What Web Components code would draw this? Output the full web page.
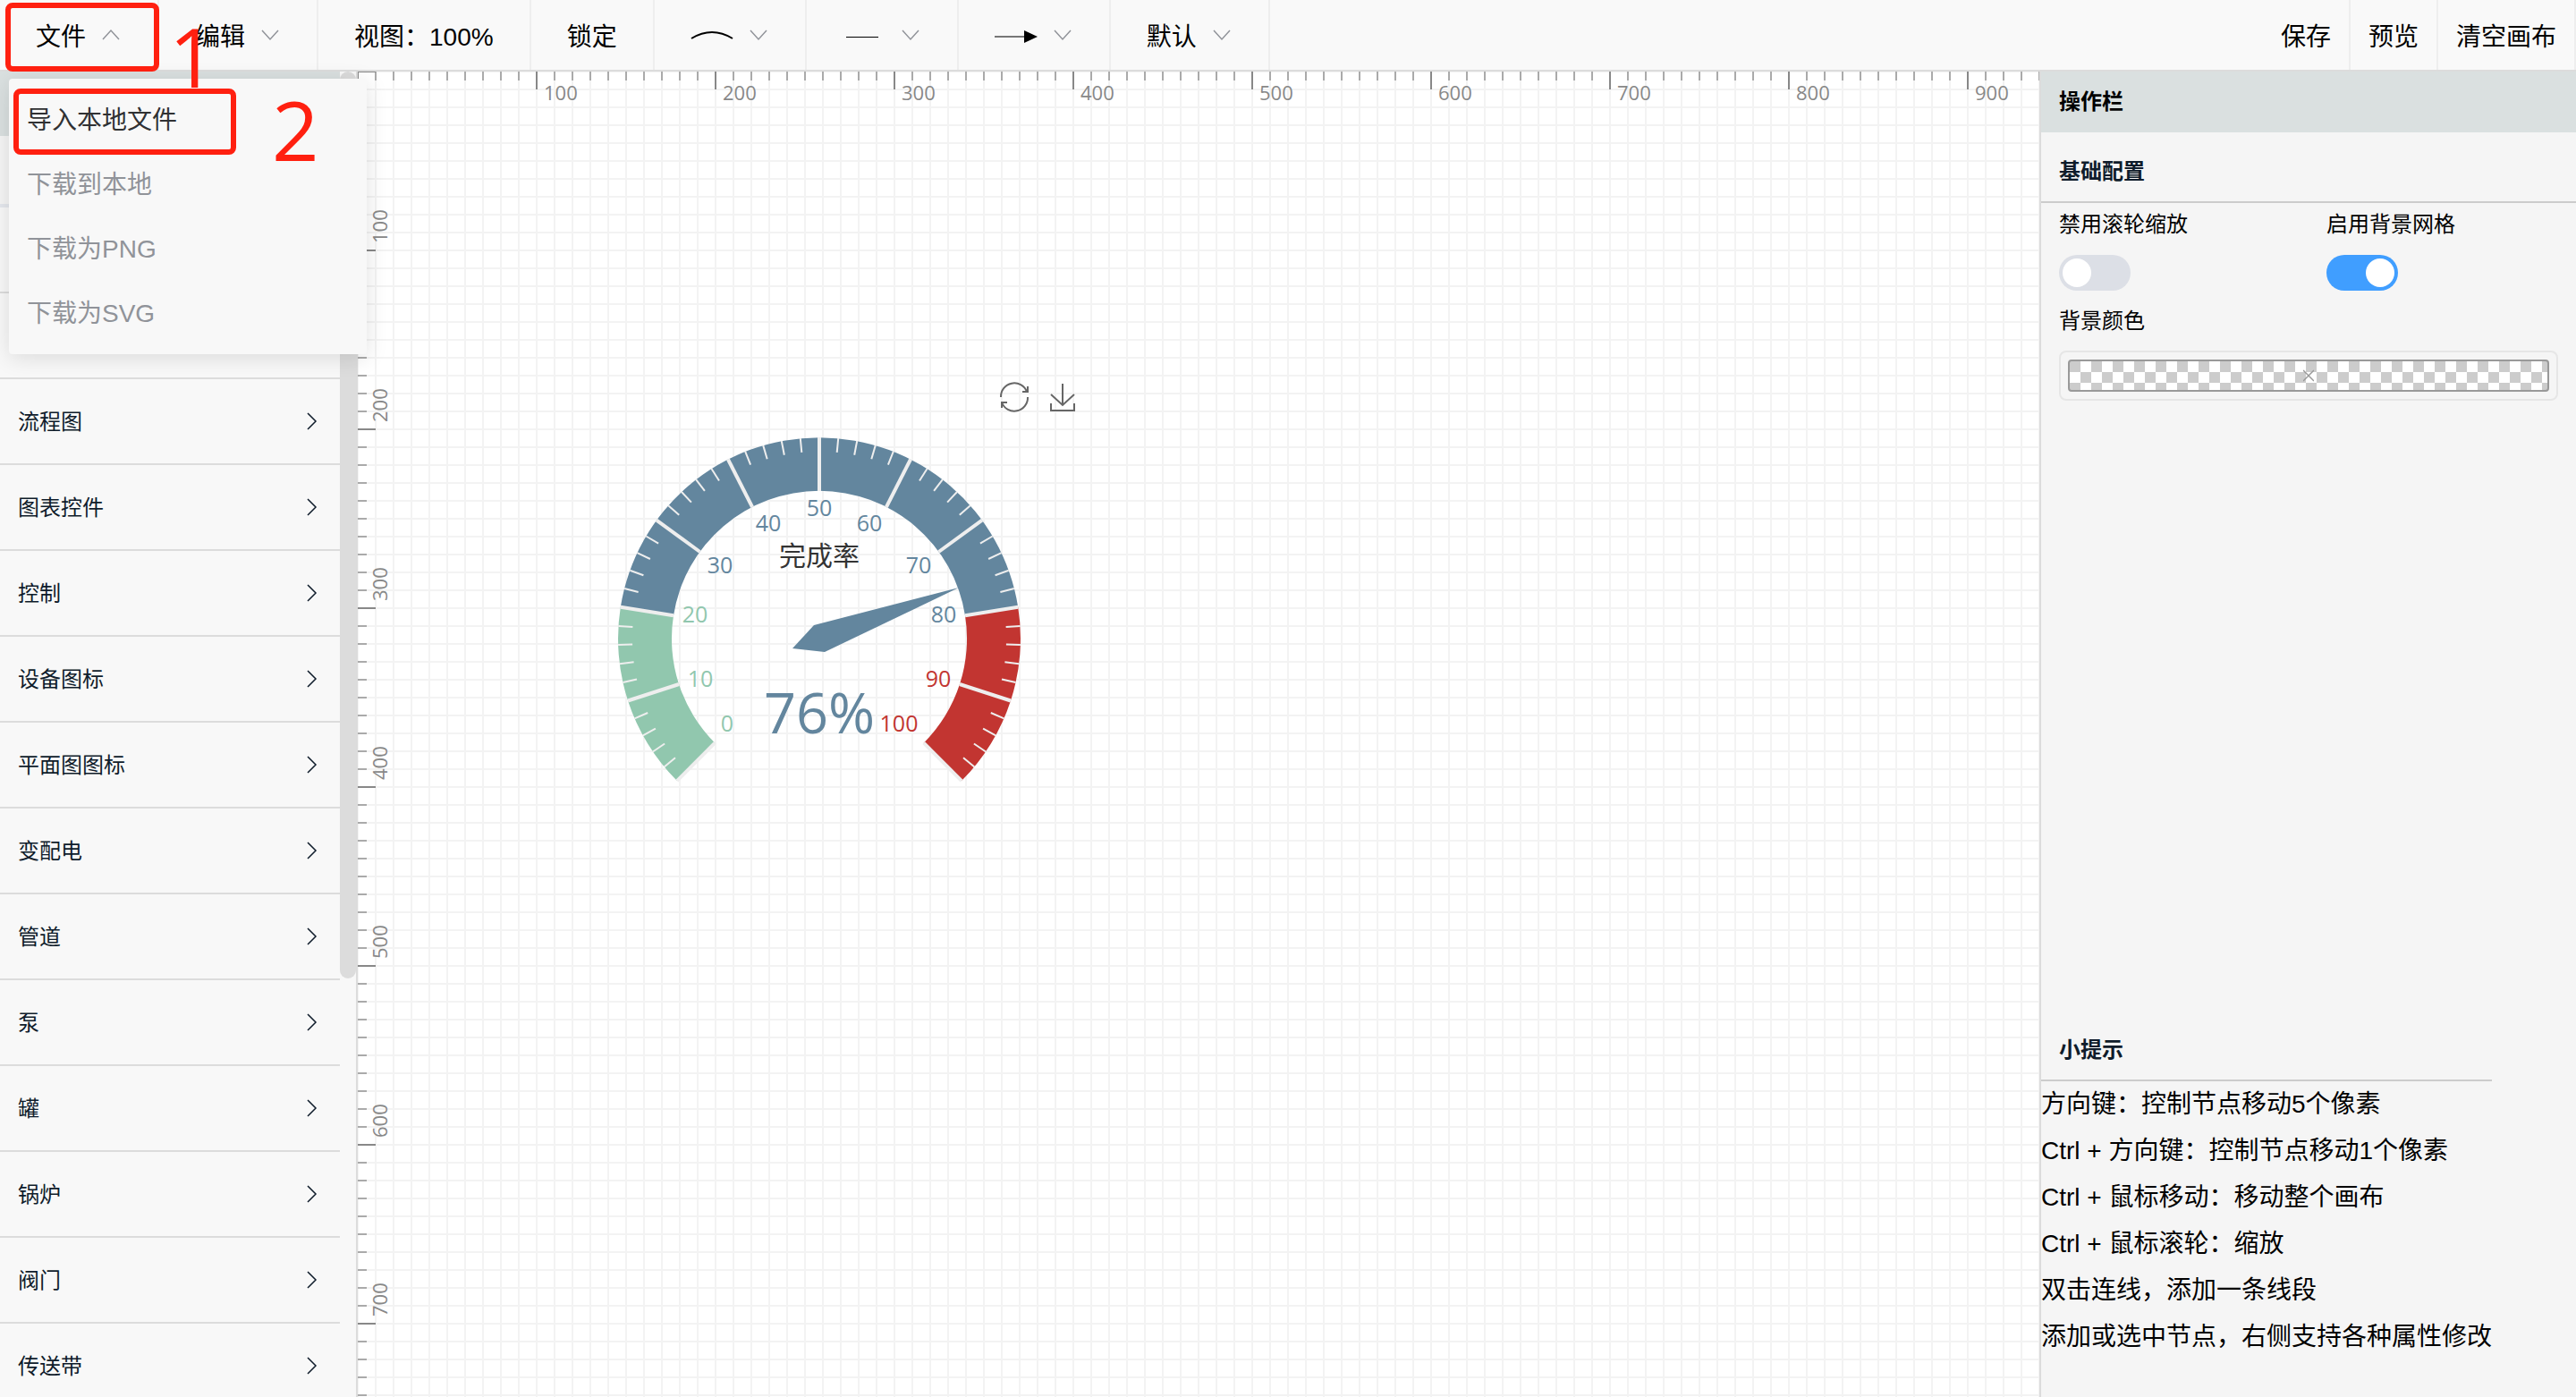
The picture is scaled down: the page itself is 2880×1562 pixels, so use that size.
<!DOCTYPE html>
<html lang="zh-CN">
<head>
<meta charset="utf-8">
<title>拓扑图编辑器</title>
<style>
  html, body {
    height: 100%;
    margin: 0;
  }

  body {
    display: flex;
    flex-direction: column;
    overflow: hidden;
    font-family: "Liberation Sans", "Noto Sans CJK SC", sans-serif;
    font-size: 28px;
    color: #000;
    --line: #dcdcdc;
    --head: #dae0e0;
    --ink: #0f1c2b;
    --mark: #ff2010;
    --digits: "Open Sans", "Noto Sans", sans-serif;
  }

  main {
    display: flex;
    flex: 1;
    min-height: 0;
  }
</style>
</head>
<body>

<tool-bar>
  <tool-item arrow="up">文件</tool-item>
  <tool-item arrow="down">编辑</tool-item>
  <tool-item>视图：100%</tool-item>
  <tool-item>锁定</tool-item>
  <tool-item arrow="down" label="连线类型">
    <svg width="48" height="24" viewBox="0 0 48 24"><path d="M1 16Q24 2 47 16" fill="none" stroke="#000" stroke-width="2"/></svg>
  </tool-item>
  <tool-item arrow="down" label="线条样式">
    <svg width="48" height="24" viewBox="0 0 48 24"><path d="M4 14.5H40" stroke="#000" stroke-width="1"/></svg>
  </tool-item>
  <tool-item arrow="down" label="箭头">
    <svg width="48" height="24" viewBox="0 0 48 24"><path d="M0 14H34" stroke="#777" stroke-width="2"/><path d="M33 7L48 14L33 21Z"/></svg>
  </tool-item>
  <tool-item arrow="down">默认</tool-item>
  <tool-item slot="end" compact>保存</tool-item>
  <tool-item slot="end" compact>预览</tool-item>
  <tool-item slot="end" compact>清空画布</tool-item>
</tool-bar>

<main>
  <side-list></side-list>
  <draw-canvas>
    <gauge-chart value="76" name="完成率"></gauge-chart>
  </draw-canvas>
  <config-panel></config-panel>
</main>

<file-menu></file-menu>
<guide-marks></guide-marks>

<script>
const define = (name, html, setup) => {
  const template = document.createElement("template");
  template.innerHTML = html;

  window.customElements.define(name, class extends HTMLElement {
    constructor() {
      super();
      this.attachShadow({ mode: "open" });
      this.shadowRoot.appendChild(template.content.cloneNode(true));
      if (setup) setup(this, this.shadowRoot);
    }
  });
};

define("tool-bar", `
  <style>
    :host {
      display: flex;
      justify-content: space-between;
      height: 78px;
      flex: none;
      background: #f9f9f9;
      border-bottom: 2px solid var(--line);
    }
    div { display: flex; }
  </style>
  <div><slot></slot></div>
  <div><slot name="end"></slot></div>
`);

define("tool-item", `
  <style>
    :host { display: flex; }
    button {
      display: flex;
      align-items: center;
      gap: 16px;
      padding: 0 40px;
      border: 0;
      border-right: 2px solid #eee;
      background: none;
      font: inherit;
      color: inherit;
      white-space: nowrap;
      cursor: pointer;
    }
    :host([compact]) button { padding: 0 20px; }
    .arrow {
      display: none;
      fill: none;
      stroke: #909399;
      stroke-width: 1.5;
    }
    :host([arrow]) .arrow { display: block; }
    :host([arrow="up"]) .arrow { transform: rotate(180deg); }
  </style>
  <button type="button">
    <slot></slot>
    <svg class="arrow" width="24" height="24" viewBox="0 0 24 24"><path d="M3 7L12 17L21 7"/></svg>
  </button>
`, (host, root) => {
  if (host.hasAttribute("label")) {
    root.querySelector("button").setAttribute("aria-label", host.getAttribute("label"));
  }
});

define("file-menu", `
  <style>
    :host {
      position: absolute;
      top: 88px;
      left: 10px;
      width: 400px;
      padding: 8px 0 12px;
      box-sizing: border-box;
      background: #f8f8f8;
      border-radius: 4px;
      box-shadow: 0 4px 24px rgba(0, 0, 0, .12);
    }
    button {
      display: block;
      width: 100%;
      height: 72px;
      padding: 0 20px;
      border: 0;
      background: none;
      font: inherit;
      color: #909399;
      text-align: left;
    }
    button:first-of-type { color: #303133; }
  </style>
  <button type="button">导入本地文件</button>
  <button type="button">下载到本地</button>
  <button type="button">下载为PNG</button>
  <button type="button">下载为SVG</button>
`);

// step markers laid over the toolbar and the open menu
define("guide-marks", `
  <style>
    :host {
      position: absolute;
      inset: 0;
      pointer-events: none;
      color: var(--mark);
      font-family: var(--digits);
      font-size: 92px;
      font-weight: 500;
      line-height: 92px;
    }
    div, span { position: absolute; }
    div {
      box-sizing: border-box;
      border: 6px solid;
      border-radius: 8px;
    }
    .file { left: 6px; top: 3px; width: 172px; height: 77px; }
    .import { left: 15px; top: 99px; width: 249px; height: 74px; }
    .one { left: 189px; top: 17px; }
    .two { left: 304px; top: 99px; }
  </style>
  <div class="file"></div>
  <span class="one">1</span>
  <div class="import"></div>
  <span class="two">2</span>
`);

define("side-list", `
  <style>
    :host {
      display: flex;
      flex: none;
      width: 398px;
      overflow: hidden;
      background: #f8f8f8;
      border-right: 2px solid var(--line);
    }
    nav { width: 380px; }
    .head { height: 72px; background: var(--head); }
    .search { height: 76px; background: #f5f5f5; border-bottom: 4px solid #e4e7ed; }
    .row {
      display: flex;
      align-items: center;
      justify-content: space-between;
      width: 100%;
      height: 96px;
      padding: 0 20px;
      box-sizing: border-box;
      border: 0;
      border-bottom: 2px solid var(--line);
      background: none;
      font: inherit;
      font-size: 24px;
      color: var(--ink);
      text-align: left;
    }
    .row span { padding-bottom: 4px; }
    .row svg { fill: none; stroke: var(--ink); stroke-width: 1.5; }
    .rail { flex: 1; }
    .thumb {
      height: 68.4%;
      border-radius: 10px;
      background: var(--line);
    }
  </style>
  <nav>
    <div class="head"></div>
    <div class="search"></div>
    <div class="row"></div>
    <div class="row"></div>
  </nav>
  <div class="rail"><div class="thumb"></div></div>
`, (host, root) => {
  const nav = root.querySelector("nav");
  ["流程图", "图表控件", "控制", "设备图标", "平面图图标", "变配电",
    "管道", "泵", "罐", "锅炉", "阀门", "传送带"].forEach(name => {
    const row = document.createElement("button");
    row.type = "button";
    row.className = "row";
    row.innerHTML = `<span>${name}</span>
      <svg width="24" height="24" viewBox="0 0 24 24"><path d="M8 3L17 12L8 21"/></svg>`;
    nav.appendChild(row);
  });
});

define("draw-canvas", `
  <style>
    :host {
      display: block;
      flex: 1;
      min-width: 0;
      position: relative;
      overflow: hidden;
      background:
        repeating-linear-gradient(90deg, #f3f3f3 0 2px, transparent 2px 20px) -1px 0 / 2000px 100%,
        repeating-linear-gradient(#f3f3f3 0 2px, transparent 2px 20px) 0 -1px / 100% 2000px,
        #fff;
    }
    .ruler {
      position: absolute;
      top: 0;
      left: 0;
      display: flex;
      font-family: var(--digits);
      font-size: 22px;
      line-height: 24px;
      color: #888;
    }
    .ruler span {
      flex: none;
      box-sizing: border-box;
    }
    .x {
      background:
        repeating-linear-gradient(90deg, #888 0 2px, transparent 2px 200px) -1px 0 / 3000px 20px no-repeat,
        repeating-linear-gradient(90deg, #aaa 0 2px, transparent 2px 20px) -1px 0 / 3000px 10px no-repeat;
    }
    .x span { width: 200px; padding: 11px 0 0 8px; }
    .y {
      bottom: 0;
      flex-direction: column;
      background:
        repeating-linear-gradient(#888 0 2px, transparent 2px 200px) 0 -1px / 20px 3000px no-repeat,
        repeating-linear-gradient(#aaa 0 2px, transparent 2px 20px) 0 -1px / 10px 3000px no-repeat;
    }
    .y span {
      width: 36px;
      height: 200px;
      padding: 8px 12px 0 0;
      writing-mode: vertical-rl;
      transform: rotate(180deg);
    }
    ::slotted(gauge-chart) {
      position: absolute;
      left: 280px;
      top: 340px;
    }
  </style>
  <div class="ruler x"><span></span></div>
  <div class="ruler y"></div>
  <slot></slot>
`, (host, root) => {
  for (let n = 100; n <= 900; n += 100) {
    const label = document.createElement("span");
    label.textContent = n;
    root.querySelector(".x").appendChild(label);
    if (n <= 700) root.querySelector(".y").appendChild(label.cloneNode(true));
  }
});

define("gauge-chart", `
  <style>
    :host {
      display: block;
      width: 560px;
      height: 480px;
    }
    svg { display: block; }
    text {
      font-family: var(--digits);
      font-size: 25px;
      text-anchor: middle;
    }
    .name {
      font-family: "Noto Sans CJK SC", sans-serif;
      font-size: 30px;
      fill: #333;
    }
    .value { font-size: 63px; fill: #63869e; }
    .tools { fill: none; stroke: #666; stroke-width: 2; }
  </style>
  <svg width="560" height="480" viewBox="0 0 560 480">
    <g class="tools">
      <path d="M439 24A15 15 0 0 1 468 18M469 12V18H463M469 24A15 15 0 0 1 440 30M446 30H440V36"/>
      <path d="M508 9V33M495 21L508 33L521 21M495 31V39H521V31"/>
    </g>
    <g class="dial"></g>
  </svg>
`, (host, root) => {
  const cx = 236, cy = 294, outer = 225, inner = 165;
  const point = (r, percent) => {
    const a = (225 - percent * 2.7) * Math.PI / 180;
    return [cx + r * Math.cos(a), cy - r * Math.sin(a)].map(v => v.toFixed(1));
  };
  const color = p => p <= 20 ? "#91c7ae" : p <= 80 ? "#63869e" : "#c23531";
  let html = "";

  [[0, 20], [20, 80], [80, 100]].forEach(([from, to]) => {
    html += `<path fill="${color(to)}" d="M${point(outer, from)}
      A${outer} ${outer} 0 0 1 ${point(outer, to)}
      L${point(inner, to)}
      A${inner} ${inner} 0 0 0 ${point(inner, from)}Z"/>`;
  });

  for (let p = 0; p <= 100; p += 2) {
    const major = p % 10 === 0;
    html += `<path stroke="#eee" stroke-width="${major ? 4 : 2}"
      d="M${point(outer, p)}L${point(major ? inner : outer - 16, p)}"/>`;
  }

  // baseline centre of each scale label, 0 to 100
  const labels = [[133, 398], [103, 348], [97, 276], [125, 221], [179, 174], [236, 157],
    [292, 174], [347, 221], [375, 276], [369, 348], [325, 398]];
  labels.forEach(([x, y], i) => {
    html += `<text x="${x}" y="${y}" fill="${color(i * 10)}">${i * 10}</text>`;
  });

  html += `
    <path fill="#63869e" d="M392 237L242 309L206 305L230 279Z"/>
    <text class="name" x="${cx}" y="212">${host.getAttribute("name")}</text>
    <text class="value" x="${cx}" y="400">${host.getAttribute("value")}%</text>`;
  root.querySelector(".dial").innerHTML = html;
});

define("switch-field", `
  <style>
    :host { display: block; flex: 1; padding-left: 20px; }
    label {
      display: flex;
      flex-direction: column;
      align-items: flex-start;
    }
    input {
      appearance: none;
      display: flex;
      width: 80px;
      height: 40px;
      margin: 10px 0;
      padding: 4px;
      box-sizing: border-box;
      border-radius: 20px;
      background: #dcdfe6;
    }
    input::before {
      content: "";
      width: 32px;
      height: 32px;
      border-radius: 50%;
      background: #fff;
    }
    input:checked {
      justify-content: flex-end;
      background: #409eff;
    }
  </style>
  <label><slot></slot><input type="checkbox"></label>
`, (host, root) => {
  root.querySelector("input").checked = host.hasAttribute("checked");
});

define("config-panel", `
  <style>
    :host {
      display: flex;
      flex-direction: column;
      flex: none;
      width: 598px;
      background: #f5f5f5;
      border-left: 2px solid var(--line);
      font-size: 24px;
      line-height: 48px;
    }
    h2, h3 {
      margin: 0;
      padding: 0 20px;
      font-size: 24px;
      line-height: 68px;
    }
    h2 { background: var(--head); }
    h3 {
      padding-top: 11px;
      line-height: 66px;
      color: var(--ink);
      border-bottom: 2px solid #ccc;
    }
    .switches { display: flex; }
    .color {
      padding: 0 20px;
    }
    .color label { display: block; }
    .color button {
      display: flex;
      width: 100%;
      height: 56px;
      margin-top: 9px;
      padding: 8px;
      border: 2px solid #e6e6e6;
      border-radius: 8px;
      background: none;
    }
    .color span {
      display: flex;
      align-items: center;
      justify-content: center;
      flex: 1;
      height: 32px;
      border: 2px solid #999;
      border-radius: 4px;
      background: repeating-conic-gradient(#fff 0 25%, #ccc 0 50%) 0 0 / 24px 24px;
    }
    .tips {
      align-self: flex-start;
      margin-top: auto;
      padding-bottom: 41px;
    }
    ul {
      margin: 0;
      padding: 0;
      list-style: none;
      font-size: 28px;
      line-height: 52px;
    }
  </style>
  <h2>操作栏</h2>
  <section>
    <h3>基础配置</h3>
    <div class="switches">
      <switch-field>禁用滚轮缩放</switch-field>
      <switch-field checked>启用背景网格</switch-field>
    </div>
    <div class="color">
      <label for="bg">背景颜色</label>
      <button id="bg" type="button"><span>
        <svg width="12" height="14" viewBox="0 0 12 14" fill="none" stroke="#999" stroke-width="1.5"><path d="M0 1L12 13M12 1L0 13"/></svg>
      </span></button>
    </div>
  </section>
  <section class="tips">
    <h3>小提示</h3>
    <ul>
      <li>方向键：控制节点移动5个像素</li>
      <li>Ctrl + 方向键：控制节点移动1个像素</li>
      <li>Ctrl + 鼠标移动：移动整个画布</li>
      <li>Ctrl + 鼠标滚轮：缩放</li>
      <li>双击连线，添加一条线段</li>
      <li>添加或选中节点，右侧支持各种属性修改</li>
    </ul>
  </section>
`);
</script>
</body>
</html>
